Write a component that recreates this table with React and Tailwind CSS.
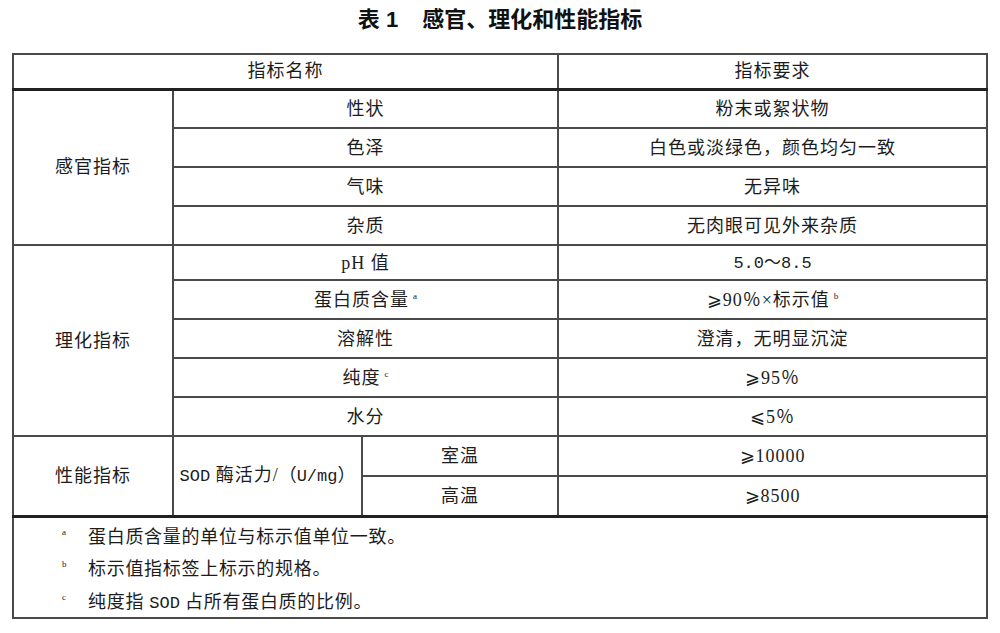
export default function App() {
  const cell = "border-2 border-[#4a4a4a] p-0 align-middle";
  const sup = "inline-block text-[9px] leading-[9px] relative -top-[7px] ml-[4px] tracking-normal";
  const mono = "font-[family-name:Liberation_Mono,Noto_Sans_CJK_SC,monospace] tracking-[0px]";
  const rows1 = [
    ["性状", "粉末或絮状物"],
    ["色泽", "白色或淡绿色，颜色均匀一致"],
    ["气味", "无异味"],
    ["杂质", "无肉眼可见外来杂质"],
  ];
  return (
    <div className="w-[1000px] h-[633px] bg-white text-[#1c1c1c] font-[family-name:Liberation_Serif,Noto_Sans_CJK_SC,serif] overflow-hidden">
      <h1 className="pt-[6px] h-[53px] text-center font-[family-name:Liberation_Sans,Noto_Sans_CJK_SC,sans-serif] font-bold text-[22px] leading-[28px] text-[#111]">
        表 1<span className="ml-[24px]">感官、理化和性能指标</span>
      </h1>
      <table className="ml-[12px] w-[974px] table-fixed border-collapse border-2 border-[#111] font-[family-name:Liberation_Serif,Noto_Sans_CJK_SC,serif] text-[#1c1c1c] font-normal text-[18px] leading-[24px] tracking-[1px] text-center">
        <colgroup>
          <col className="w-[160px]" />
          <col className="w-[189px]" />
          <col className="w-[196px]" />
          <col className="w-[429px]" />
        </colgroup>
        <tbody>
          <tr className="h-[35px]">
            <td colSpan={3} className={cell + " border-b-[3px] border-b-[#222]"}>指标名称</td>
            <td className={cell + " border-b-[3px] border-b-[#222]"}>指标要求</td>
          </tr>
          {rows1.map(([a, b], i) => (
            <tr key={a} className="h-[39px]">
              {i === 0 && (
                <td rowSpan={4} className={cell}>感官指标</td>
              )}
              <td colSpan={2} className={cell}>{a}</td>
              <td className={cell}>{b}</td>
            </tr>
          ))}
          <tr className="h-[35px]">
            <td rowSpan={5} className={cell}>理化指标</td>
            <td colSpan={2} className={cell}>pH 值</td>
            <td className={cell}><span className={mono + " text-[17px]"}>5.0～8.5</span></td>
          </tr>
          <tr className="h-[39px]">
            <td colSpan={2} className={cell}>蛋白质含量<span className={sup}>a</span></td>
            <td className={cell}>⩾90％×标示值<span className={sup}>b</span></td>
          </tr>
          <tr className="h-[39px]">
            <td colSpan={2} className={cell}>溶解性</td>
            <td className={cell}>澄清，无明显沉淀</td>
          </tr>
          <tr className="h-[39px]">
            <td colSpan={2} className={cell}>纯度<span className={sup}>c</span></td>
            <td className={cell}>⩾95％</td>
          </tr>
          <tr className="h-[39px]">
            <td colSpan={2} className={cell}>水分</td>
            <td className={cell}>⩽5％</td>
          </tr>
          <tr className="h-[40px]">
            <td rowSpan={2} className={cell}>性能指标</td>
            <td rowSpan={2} className={cell}>
              <span className={mono + " text-[17px]"}>SOD</span> 酶活力/<span className="tracking-[0px]">（</span><span className={mono + " text-[17px]"}>U/mg</span><span className="tracking-[0px]">）</span>
            </td>
            <td className={cell}>室温</td>
            <td className={cell}>⩾10000</td>
          </tr>
          <tr className="h-[40px]">
            <td className={cell}>高温</td>
            <td className={cell}>⩾8500</td>
          </tr>
          <tr className="h-[102px]">
            <td colSpan={4} className={cell + " border-t-[3px] border-t-[#222] text-left align-top"}>
              <div className="flex flex-col pt-[7px] pl-[48px] gap-[8.5px] tracking-[0.7px]">
                {[
                  ["a", "蛋白质含量的单位与标示值单位一致。"],
                  ["b", "标示值指标签上标示的规格。"],
                  ["c", "纯度指 SOD 占所有蛋白质的比例。"],
                ].map(([m, t]) => (
                  <div key={m} className="flex items-start h-[24px]">
                    <span className="w-[26px] text-[9px] leading-[14px] tracking-normal">{m}</span>
                    <span>
                      {m === "c" ? (
                        <>纯度指 <span className={mono + " text-[17px]"}>SOD</span> 占所有蛋白质的比例。</>
                      ) : t}
                    </span>
                  </div>
                ))}
              </div>
            </td>
          </tr>
        </tbody>
      </table>
    </div>
  );
}
